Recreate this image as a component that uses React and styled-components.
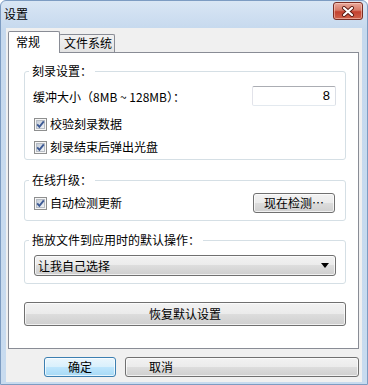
import React, { useState } from 'react'
import styled, { createGlobalStyle } from 'styled-components'

const Global = createGlobalStyle`
  html, body { margin: 0; padding: 0; background: #ffffff; }
  * { box-sizing: border-box; }
`

const Window = styled.div`
  width: 368px;
  height: 385px;
  display: flex;
  flex-direction: column;
  background: linear-gradient(to bottom, #d9e6f4 0px, #c6d9ee 28px, #c8dbef 100%);
  border: 1px solid #7d9cc2;
  border-radius: 6px 6px 0 0;
  font-family: "Noto Sans CJK SC", "Liberation Sans", sans-serif;
  font-size: 12px;
  color: #000;
`

const TitleBar = styled.div`
  height: 27px;
  flex: none;
  display: flex;
  align-items: center;
  justify-content: space-between;
  padding: 0 4px 2px 3px;
`

const Title = styled.span`
  font-size: 12px;
  line-height: 14px;
`

const CloseBtn = styled.div`
  width: 30px;
  height: 18px;
  margin-top: -5px;
  border: 1px solid #7a2d23;
  border-radius: 3px;
  display: flex;
  align-items: center;
  justify-content: center;
  background: linear-gradient(to bottom, #e9a99b 0%, #d77b68 45%, #c3412f 55%, #d0634c 100%);
  box-shadow: inset 0 0 0 1px rgba(255, 220, 210, 0.5);
`

const Body = styled.div`
  flex: 1;
  margin: 0 5px 2px 5px;
  background: #f0f0f0;
  padding: 3px 3px 0 2px;
  display: flex;
  flex-direction: column;
`

const TabStrip = styled.div`
  display: flex;
  align-items: flex-end;
  height: 21px;
  flex: none;
`

const Tab = styled.div`
  position: relative;
  z-index: ${p => (p.$active ? 2 : 1)};
  width: ${p => p.$w}px;
  height: ${p => (p.$active ? 22 : 18)}px;
  margin-bottom: ${p => (p.$active ? -1 : 0)}px;
  margin-left: ${p => (p.$active ? 0 : -1)}px;
  border: 1px solid #898c95;
  border-bottom: none;
  border-radius: 2px 2px 0 0;
  background: ${p => (p.$active ? '#ffffff' : 'linear-gradient(to bottom, #f2f2f2, #e3e3e3)')};
  padding-left: ${p => (p.$active ? 7 : 4)}px;
  line-height: ${p => (p.$active ? 19 : 16)}px;
  white-space: nowrap;
`

const Panel = styled.div`
  height: 297px;
  flex: none;
  border: 1px solid #898c95;
  background: #ffffff;
  padding: 11px 12px 0 15px;
  display: flex;
  flex-direction: column;
`

const Group = styled.fieldset`
  margin: ${p => p.$mt || 0}px 0 0 0;
  min-width: 0;
  border: 1px solid #d5dfe5;
  border-radius: 3px;
  padding: ${p => p.$pt}px 9px ${p => p.$pb}px 8px;
`

const Legend = styled.legend`
  margin-left: -4px;
  padding: 0 3px;
  line-height: 14px;
  height: 14px;
`

const Row = styled.div`
  display: flex;
  align-items: center;
  justify-content: space-between;
  height: ${p => p.$h || 20}px;
  margin-top: ${p => p.$mt || 0}px;
`

const NumInput = styled.div`
  width: 84px;
  height: 20px;
  border: 1px solid;
  border-color: #abadb3 #dbdfe6 #e3e9ef #e2e3ea;
  border-radius: 2px;
  background: #fff;
  text-align: right;
  padding-right: 5px;
  font-family: "Liberation Sans", sans-serif;
  font-size: 13px;
  line-height: 18px;
`

const Check = styled.label`
  display: flex;
  align-items: center;
  gap: 3px;
  padding-left: 1px;
  line-height: 14px;
  white-space: nowrap;
`

const Button = styled.div`
  width: ${p => (p.$w ? p.$w + 'px' : 'auto')};
  height: ${p => p.$h || 20}px;
  border: 1px solid ${p => (p.$primary ? '#3c7fb1' : '#707070')};
  border-radius: 3px;
  display: flex;
  align-items: center;
  justify-content: ${p => (p.$left ? 'flex-start' : 'center')};
  padding-left: ${p => (p.$left ? 23 : 0)}px;
  line-height: 14px;
  white-space: nowrap;
  background: ${p =>
    p.$primary
      ? 'linear-gradient(to bottom, #eaf6fd 0%, #d9f0fc 50%, #bee6fd 50%, #a7d9f5 100%)'
      : 'linear-gradient(to bottom, #f2f2f2 0%, #ebebeb 50%, #dddddd 50%, #cfcfcf 100%)'};
  box-shadow: inset 0 0 0 1px rgba(255, 255, 255, 0.7);
  flex: none;
`

const Select = styled.div`
  height: 21px;
  margin-left: 1px;
  border: 1px solid #707070;
  border-radius: 3px;
  display: flex;
  align-items: center;
  justify-content: space-between;
  padding: 0 6px 0 3px;
  line-height: 14px;
  background: linear-gradient(to bottom, #f2f2f2 0%, #ebebeb 50%, #dddddd 50%, #cfcfcf 100%);
  box-shadow: inset 0 0 0 1px rgba(255, 255, 255, 0.7);
`

const Footer = styled.div`
  display: flex;
  gap: 9px;
  margin-top: 8px;
  padding-left: 36px;
`

const CheckBox = () => (
  <svg width="13" height="13" viewBox="0 0 13 13">
    <defs>
      <linearGradient id="cbg" x1="0" y1="0" x2="1" y2="1">
        <stop offset="0" stopColor="#c3cbd6" />
        <stop offset="1" stopColor="#f4f6f8" />
      </linearGradient>
    </defs>
    <rect x="0.5" y="0.5" width="12" height="12" fill="#f6f6f6" stroke="#8e8f8f" />
    <rect x="2.5" y="2.5" width="8" height="8" fill="url(#cbg)" stroke="#b7bcc4" />
    <path d="M3.2 6.4 L5.4 8.8 L9.8 3.4" fill="none" stroke="#3d5a95" strokeWidth="1.9" />
  </svg>
)

const Arrow = () => (
  <svg width="8" height="5" viewBox="0 0 8 5">
    <path d="M0 0 H8 L4 5 Z" fill="#000" />
  </svg>
)

const CloseX = () => (
  <svg width="14" height="11" viewBox="0 0 14 11">
    <path d="M3 2 L11 9 M11 2 L3 9" stroke="#5a1a12" strokeWidth="4" strokeLinecap="round" />
    <path d="M3 2 L11 9 M11 2 L3 9" stroke="#ffffff" strokeWidth="2.2" strokeLinecap="round" />
  </svg>
)

export default function App() {
  const [tab, setTab] = useState('general')
  return (
    <>
      <Global />
      <Window>
        <TitleBar>
          <Title>设置</Title>
          <CloseBtn><CloseX /></CloseBtn>
        </TitleBar>
        <Body>
          <TabStrip>
            <Tab $active={tab === 'general'} $w={52} onClick={() => setTab('general')}>常规</Tab>
            <Tab $active={tab === 'fs'} $w={56} onClick={() => setTab('fs')}>文件系统</Tab>
          </TabStrip>
          <Panel>
            <Group $pt={8} $pb={4}>
              <Legend>刻录设置：</Legend>
              <Row>
                <span>缓冲大小（8MB ~ 128MB）：</span>
                <NumInput>8</NumInput>
              </Row>
              <Row $h={16} $mt={10}>
                <Check><CheckBox />校验刻录数据</Check>
              </Row>
              <Row $h={16} $mt={7}>
                <Check><CheckBox />刻录结束后弹出光盘</Check>
              </Row>
            </Group>
            <Group $mt={13} $pt={6} $pb={7}>
              <Legend>在线升级：</Legend>
              <Row>
                <Check><CheckBox />自动检测更新</Check>
                <Button $w={82} style={{ marginRight: 1 }}>现在检测…</Button>
              </Row>
            </Group>
            <Group $mt={12} $pt={8} $pb={7}>
              <Legend>拖放文件到应用时的默认操作：</Legend>
              <Select>
                <span>让我自己选择</span>
                <Arrow />
              </Select>
            </Group>
            <Button $h={24} style={{ marginTop: 18 }}>恢复默认设置</Button>
          </Panel>
          <Footer>
            <Button $primary $w={72}>确定</Button>
            <Button $left $w={234}>取消</Button>
          </Footer>
        </Body>
      </Window>
    </>
  )
}
